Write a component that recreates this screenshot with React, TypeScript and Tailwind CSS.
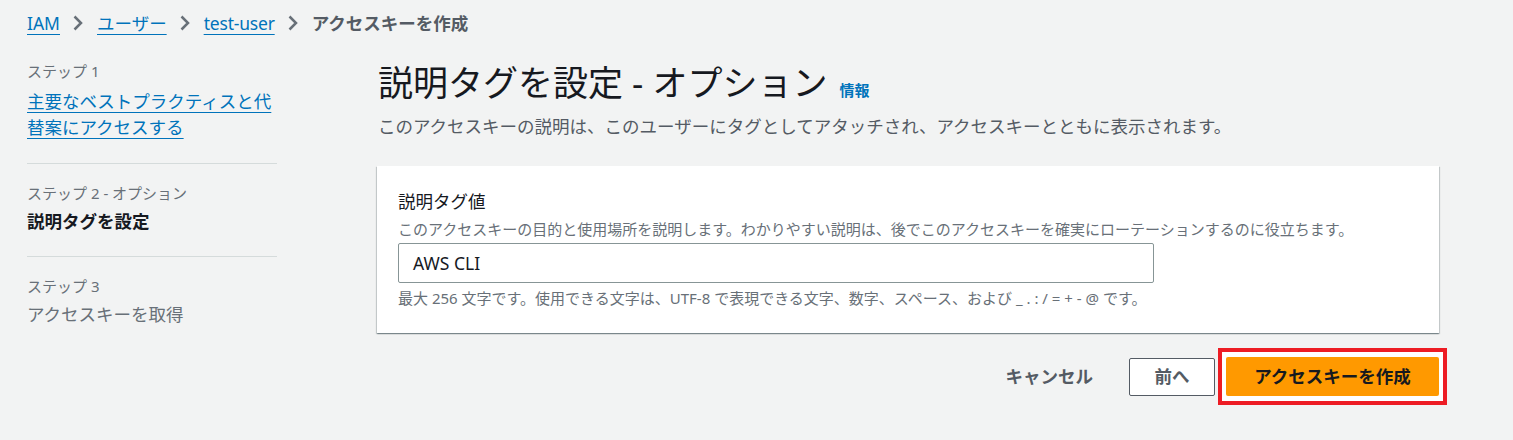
const font = 'font-["Noto_Sans","Noto_Sans_CJK_JP",sans-serif]';

function Chevron() {
  return (
    <svg
      width="12"
      height="16"
      viewBox="0 0 12 16"
      fill="none"
      stroke="#687078"
      strokeWidth="2.5"
      className="ml-[12px] mr-[13px] shrink-0"
    >
      <path d="M2.5 1.5 L9 8 L2.5 14.5" />
    </svg>
  );
}

export default function App() {
  return (
    <div className={`${font} min-h-[440px] bg-[#f2f3f3] text-[#16191f]`}>
      {/* Breadcrumb */}
      <nav className="flex items-center px-[27px] pt-[11px] text-[17.5px] leading-[24px]">
        <a className="text-[#0073bb] underline underline-offset-[4px]">IAM</a>
        <Chevron />
        <a className="text-[#0073bb] underline underline-offset-[4px]">ユーザー</a>
        <Chevron />
        <a className="text-[#0073bb] underline underline-offset-[4px] tracking-[-0.2px]">test-user</a>
        <Chevron />
        <span className="font-bold text-[#545b64]">アクセスキーを作成</span>
      </nav>

      <div className="mt-[26px] flex gap-[100px] px-[27px]">
        {/* Steps */}
        <aside className="w-[250px] shrink-0">
          <div className="text-[15px] leading-[20px] text-[#687078]">ステップ 1</div>
          <a className="mt-[7px] block text-[17.5px] leading-[26px] text-[#0073bb] underline underline-offset-[4px]">
            主要なベストプラクティスと代替案にアクセスする
          </a>
          <div className="mt-[23px] border-t border-[#d5dbdb]" />
          <div className="pt-[19px] text-[15px] leading-[20px] text-[#687078]">ステップ 2 - オプション</div>
          <div className="mt-[5px] text-[17.5px] font-bold leading-[26px]">説明タグを設定</div>
          <div className="mt-[22px] border-t border-[#d5dbdb]" />
          <div className="pt-[19px] text-[15px] leading-[20px] text-[#687078]">ステップ 3</div>
          <div className="mt-[5px] text-[17.5px] leading-[26px] text-[#687078]">アクセスキーを取得</div>
        </aside>

        {/* Main */}
        <main className="w-[1062px] shrink-0">
          <div className="flex items-baseline gap-[12px] pl-px">
            <h1 className="text-[35px] font-normal leading-[44px]">説明タグを設定 - オプション</h1>
            <a className="text-[15px] font-bold text-[#0073bb]">情報</a>
          </div>
          <p className="mt-[8px] pl-px text-[17.5px] leading-[26px] text-[#545b64]">
            このアクセスキーの説明は、このユーザーにタグとしてアタッチされ、アクセスキーとともに表示されます。
          </p>

          <section className="mt-[27px] bg-white px-[21px] pb-[25px] pt-[23px] shadow-[0_1px_1px_0_rgba(0,28,36,0.3),1px_1px_1px_0_rgba(0,28,36,0.15),-1px_1px_1px_0_rgba(0,28,36,0.15)]">
            <label className="block text-[17.5px] leading-[24px]">説明タグ値</label>
            <div className="mt-[6px] text-[15px] leading-[20px] text-[#687078]">
              このアクセスキーの目的と使用場所を説明します。わかりやすい説明は、後でこのアクセスキーを確実にローテーションするのに役立ちます。
            </div>
            <div className="mt-[4px] flex h-[40px] w-[756px] items-center rounded-[2px] border border-[#879596] px-[14px] text-[17.5px]">
              AWS CLI
            </div>
            <div className="mt-[5px] text-[15px] leading-[20px] text-[#687078]">
              最大 256 文字です。使用できる文字は、UTF-8 で表現できる文字、数字、スペース、および _ . : / = + - @ です。
            </div>
          </section>

          <div className="-mr-[8px] mt-[15px] flex items-center justify-end text-[17.5px] font-bold">
            <button className="mr-[36px] text-[#545b64]">キャンセル</button>
            <button className="h-[38px] w-[86px] rounded-[2px] border border-[#545b64] bg-white text-[#545b64]">
              前へ
            </button>
            <div className="ml-[3px] border-4 border-[#ed1c24] bg-white px-[4px] py-[5px]">
              <button className="h-[39px] w-[213px] rounded-[2px] bg-[#ff9900] text-[#16191f]">
                アクセスキーを作成
              </button>
            </div>
          </div>
        </main>
      </div>
    </div>
  );
}
